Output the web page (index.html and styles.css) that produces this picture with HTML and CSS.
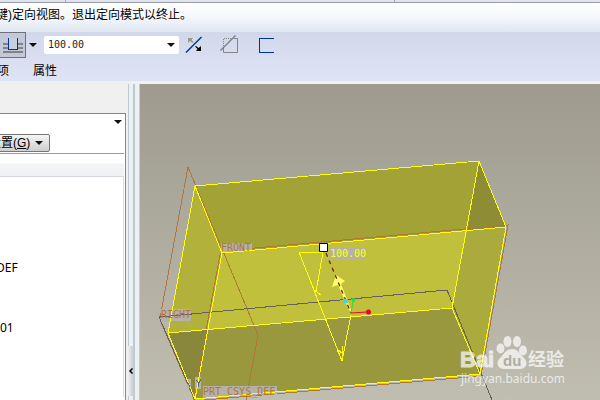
FILE: index.html
```html
<!DOCTYPE html>
<html lang="zh-CN">
<head>
<meta charset="utf-8">
<title>定向视图</title>
<link rel="stylesheet" href="styles.css">
</head>
<body>
<div class="app">
  <header class="header">
    <div class="strip"><span class="strip-split"></span></div>
    <p class="message">键)定向视图。退出定向模式以终止。</p>
    <div class="toolbar">
      <button class="tool tool-active" type="button" aria-label="深度">
        <svg width="20" height="20" viewBox="0 0 20 20" shape-rendering="crispEdges">
          <path d="M0 8h20v2H0zM0 12h20v2H0zM0 16h20v2H0z" fill="#808284"/>
          <path d="M5 3h10v12H5z" fill="#c8cfdf"/>
          <path d="M5.500 3v11.500h9V3" fill="none" stroke="#003399"/>
        </svg>
      </button>
      <button class="drop" type="button" aria-label="更多深度选项"><span class="caret"></span></button>
      <div class="combo">
        <input class="combo-input" type="text" value="100.00" aria-label="深度值">
        <button class="combo-button" type="button" aria-label="选择深度值"><span class="caret"></span></button>
      </div>
      <button class="icon flip" type="button" aria-label="反向">
        <svg width="18" height="18" viewBox="0 0 18 18">
          <path d="M1 16.500 16.500 1" stroke="#003399" stroke-width="1.500"/>
          <path d="M3 2h5L6.500 4 8.500 6 7.500 7 5 5 3 7z" fill="#989888"/>
          <path d="M16 15h-5l1.500-2L10 10.500 11 10l2.500 2L16 10z" fill="#000"/>
        </svg>
      </button>
      <button class="icon cut" type="button" aria-label="移除材料">
        <svg width="20" height="20" viewBox="0 0 20 20" fill="none" stroke="#838487">
          <path d="M3.500 13v4.500h14v-14h-4"/>
          <path d="M3.500 13V3.500h10" stroke-dasharray="1 1"/>
          <path d="M.5 15.500 15.500.5" stroke-width="1.500"/>
        </svg>
      </button>
      <button class="icon sketch" type="button" aria-label="加厚草绘">
        <svg width="18" height="18" viewBox="0 0 18 18" fill="none" stroke="#003399" shape-rendering="crispEdges">
          <path d="M17 2.500H2.500v14H17"/>
        </svg>
      </button>
    </div>
    <nav class="tabs">
      <a class="tab" href="#options">项</a>
      <a class="tab" href="#properties">属性</a>
    </nav>
  </header>
  <main class="workspace">
    <aside class="side">
      <div class="panel">
        <div class="panel-top"><button class="panel-menu" type="button" aria-label="面板菜单"><span class="caret"></span></button></div>
        <button class="settings" type="button"><span>设置(<u>G</u>)</span><span class="caret"></span></button>
        <div class="tree">
          <div class="tree-head"></div>
          <ul class="tree-list">
            <li>DEF</li>
            <li>01</li>
          </ul>
        </div>
      </div>
    </aside>
    <div class="splitter">
      <button class="collapse" type="button" aria-label="折叠面板">
        <svg width="4" height="6" viewBox="0 0 4 6" fill="none" stroke="#000" stroke-width="1.500"><path d="M3.500.5 1 3l2.500 2.500"/></svg>
      </button>
    </div>
    <section class="canvas" aria-label="模型视图">
      <svg class="scene" viewBox="140 84 460 316" preserveAspectRatio="xMinYMin slice">
        <g class="faces">
          <path fill="#a3a237" d="M195 186 479 161 467 231 222 253z"/>
          <path fill="#8e8d36" d="M479 161 506 227 467 231z"/>
          <path fill="#b2b13b" d="M195 186 222 253 208 330 168 333z"/>
          <path fill="#c1c03d" d="M222 253 467 231 452 308 208 330z"/>
          <path fill="#abaa3d" d="M467 231 506 227 480 374 452 308z"/>
          <path fill="#99983e" d="M208 330 452 308 480 374 195 399z"/>
          <path fill="#88873b" d="M168 333 208 330 195 399z"/>
        </g>
        <g class="datum">
          <path d="M160 318 188 167 258 335 246 400M160 320 194 399M220 255 222 251 508 225 481 376 193 401 220 255"/>
        </g>
        <path class="top-plane" d="M195 400 159 317 447 290 492 400"/>
        <g class="tag-bg">
          <path d="M221 243h31v7l-31 3zM161 309h30v12h-30zM203 386h74v8l-74 4zM195 377h6v12h-6zM187 379h4v9h-4zM329 247h37v12h-37z"/>
        </g>
        <g class="edges">
          <path d="M195 186 479 161 506 227 222 253zM168 333 452 308 480 374 195 399zM195 186 168 333M479 161 452 308M506 227 480 374M222 253 195 399"/>
        </g>
        <path class="top-plane" d="M159 317 192 314M186 380l4 7M196 380l3 3 2-4M198 383v4"/>
        <g class="tag">
          <text x="221" y="251">FRONT</text>
          <text x="161" y="318">RIGHT</text>
          <text x="203" y="395">PRT_CSYS_DEF</text>
        </g>
        <g class="section">
          <path d="M323 252H299L342 361 351 315M323 252 316 292M342 361 337 349 343 354M342 361V346M318 301 314 290 321 295"/>
        </g>
        <path d="M336 275 332 287 338 285 349 310 352 312 341 284 345 281z" fill="#ffff66"/>
        <path d="M326 253 351 313" stroke="#7d1a28" stroke-width="1.300" stroke-dasharray="4 4"/>
        <path d="M343 299h5v4h-5z" fill="#29e6df"/>
        <path d="M351 313 353 301" stroke="#2cdd3c"/>
        <circle cx="353.500" cy="300" r="2" fill="#2cdd3c"/>
        <path d="M351 313 367 312" stroke="#f00030"/>
        <circle cx="368.500" cy="312" r="2.500" fill="#f00030"/>
        <path d="M319.500 243.500h8v8h-8z" fill="#fff" stroke="#000"/>
        <text class="dimension" x="330" y="257">100.00</text>
        <g class="watermark">
          <text class="mark-brand" x="460" y="367">Bai</text>
          <ellipse cx="500.500" cy="348.500" rx="4" ry="5"/>
          <ellipse cx="507.500" cy="341.500" rx="4" ry="5.500"/>
          <ellipse cx="517" cy="341.500" rx="4" ry="5.500"/>
          <ellipse cx="523" cy="350.500" rx="4" ry="5"/>
          <path d="M512 349c6 0 8 5 12 9 5 5 2 11-4 11h-16c-6 0-9-6-4-11 4-4 6-9 12-9z"/>
          <text class="mark-du" x="503" y="366">du</text>
          <text class="mark-cn" x="528" y="366">经验</text>
          <text class="mark-url" x="461" y="383">jingyan.baidu.com</text>
        </g>
      </svg>
    </section>
  </main>
</div>
</body>
</html>
```
FILE: styles.css
```css
* { box-sizing: border-box; }
body {
  margin: 0;
  font: 12px/16px "Liberation Sans", "Noto Sans CJK SC", sans-serif;
  color: #000;
  background: #f0f0f0;
}
button { font: inherit; color: inherit; border: 0; padding: 0; background: none; }
button svg { display: block; }
.app { min-height: 100vh; display: flex; flex-direction: column; overflow: hidden; }
.caret {
  display: block;
  width: 0;
  border: 4px solid transparent;
  border-top-color: #111;
  border-bottom: 0;
}
.header { background: linear-gradient(#d1d8ea 32px, #dfe4f5 80px); border-bottom: 3px solid #f0f0f2; }
.strip { height: 3px; background: #dfe4f0; border-bottom: 1px solid #989ba2; display: flex; padding-left: 65px; }
.strip-split { width: 330px; border-left: 1px solid #a4acbd; border-right: 1px solid #a4acbd; }
.message {
  margin: 0;
  height: 29px;
  padding: 4px 0;
  text-indent: -4px;
  white-space: nowrap;
  background: linear-gradient(#fff, #f4f7fb 50%, #e0e6f1);
}
.toolbar { height: 28px; display: flex; align-items: center; padding-bottom: 2px; }
.tool { height: 26px; width: 26px; display: grid; place-items: center; }
.tool-active { border: 1px solid #6e7179; border-left: 0; background: #c2c8d7; }
.drop { width: 13px; height: 26px; display: grid; place-items: center; }
.combo { width: 135px; height: 18px; margin-left: 5px; display: flex; background: #fff; border-radius: 2px; }
.combo-input {
  flex: 1;
  min-width: 0;
  border: 0;
  padding: 0 4px;
  background: none;
  color: #222;
  font: 10px/18px "DejaVu Sans Mono", monospace;
}
.combo-button { width: 16px; display: grid; place-items: center; }
.flip { margin-left: 6px; }
.cut { margin-left: 17px; }
.sketch { margin-left: 17px; }
.tabs { height: 21px; display: flex; gap: 24px; margin-left: -3px; padding-top: 3px; }
.tab { color: #000; text-decoration: none; }
.workspace { flex: 1; display: flex; }
.side { width: 126px; padding-top: 29px; display: flex; overflow: hidden; }
.panel { flex: 1; background: #fff; border: 1px solid #85868d; border-width: 1px 1px 0 0; }
.panel-top { height: 20px; display: flex; justify-content: flex-end; padding: 5px 3px; }
.panel-menu { height: 5px; }
.settings {
  height: 18px;
  width: 63px;
  margin-left: -13px;
  display: flex;
  align-items: center;
  justify-content: space-between;
  padding: 0 6px 0 1px;
  border: 1px solid #77777b;
  border-radius: 2px;
  background: linear-gradient(#f5f5f5, #ddd 60%, #cfcfd1);
}
.tree { margin: 1px 1px 0 0; border-top: 1px solid #9a9ca3; }
.tree-head { height: 23px; background: linear-gradient(#fff 9px, #f3f4f6 10px, #eff1f4); border-bottom: 1px solid #d5d7dc; }
.tree-list {
  list-style: none;
  margin: 0;
  min-height: 220px;
  padding: 83px 0 0;
  border-right: 1px solid #dcdde2;
  font: 12px/16px "Noto Sans", sans-serif;
}
.tree-list li { height: 60px; text-indent: -4px; }
.tree-list li + li { text-indent: 0; }
.splitter {
  width: 14px;
  display: flex;
  align-items: flex-end;
  padding: 0 0 4px 2px;
  background: linear-gradient(90deg, #f0f0f0 2px, #bccad8 2px 3px, #eff0f1 3px 7px, #bccad8 7px 9px, #eff0f1 9px 13px, #bccad8 13px);
}
.collapse { width: 6px; height: 50px; display: grid; place-items: center; background: linear-gradient(90deg, #eee, #c4c7ca); }
.canvas { flex: 1; display: flex; min-width: 0; background: linear-gradient(#9e9b8e, #a9a799 33%, #c0bdb1); }
.scene { width: 100%; height: 100%; fill: none; }
.faces, .datum, .top-plane, .edges, .section { shape-rendering: crispEdges; }
.datum { stroke: #b0763a; }
.top-plane { stroke: #64605c; }
.edges { stroke: #ffff08; }
.section { stroke: #ffff08; }
.tag-bg { fill: #b5b1a6; }
.tag { fill: #b0763a; font: 10px "DejaVu Sans Mono", monospace; }
.dimension { fill: #ffff08; font: 10px "DejaVu Sans Mono", monospace; }
.watermark { fill: #fff; opacity: 0.7; }
.mark-brand { font: bold 22px "Liberation Sans", sans-serif; stroke: #fff; stroke-width: 1px; }
.mark-du { font: bold 15px "Liberation Sans", sans-serif; fill: #aaa79b; }
.mark-cn { font: bold 18px "Noto Sans CJK SC", sans-serif; }
.mark-url { font: 12px "Noto Sans", sans-serif; }
```
